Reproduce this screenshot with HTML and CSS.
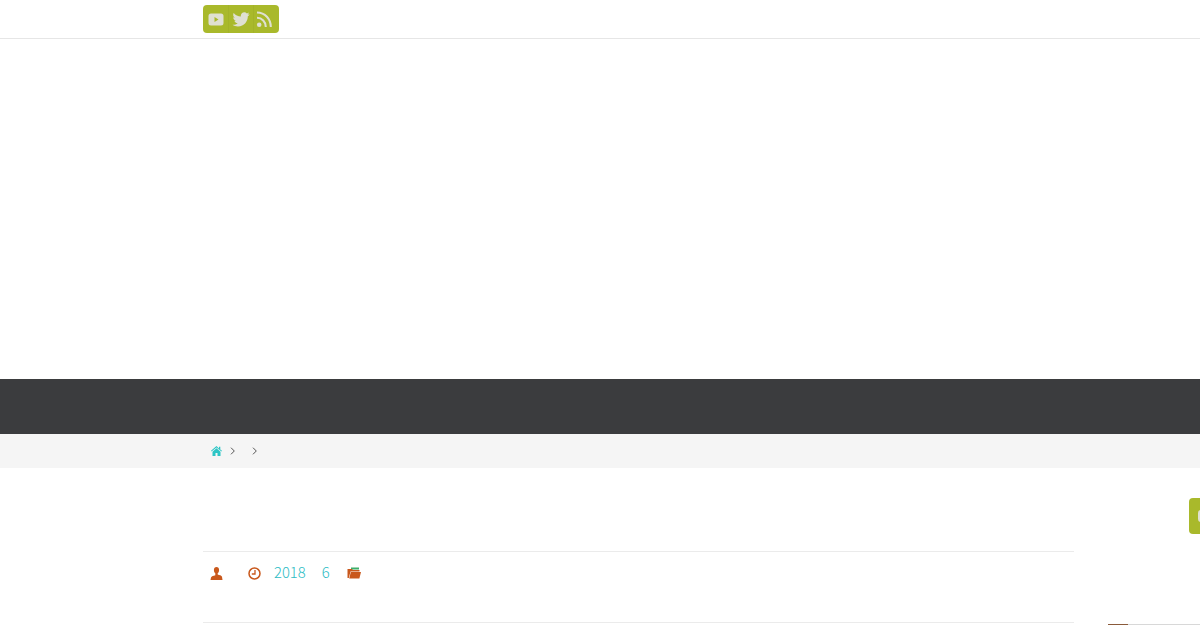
FILE: index.html
```html
<!doctype html>
<html lang="en">
  <head>
    <meta charset="UTF-8" />
    <title>Post</title>
    <link rel="stylesheet" href="styles.css">
  </head>
  <body>
    <div class="topbar">
      <div class="wrap">
        <div class="social">
          <a class="social-item" href="#">
            <svg width="16" height="13" viewBox="0 0 16 13"><path fill="#dfe0d2" fill-rule="evenodd" d="M3 .5h10A2.500 2.500 0 0 1 15.500 3v7a2.500 2.500 0 0 1-2.500 2.500H3A2.500 2.500 0 0 1 .5 10V3A2.500 2.500 0 0 1 3 .5zM6.500 4v5l4-2.500z"/></svg>
          </a>
          <a class="social-item" href="#">
            <svg width="18" height="15" viewBox="0 0 18 15"><path fill="#dfe0d2" d="M17.600 1.900c-.6.3-1.300.5-2 .6.7-.4 1.300-1.100 1.500-1.900-.7.4-1.400.7-2.200.8C14.200.7 13.300.3 12.300.3c-1.900 0-3.500 1.600-3.500 3.500 0 .3 0 .5.100.8C6 4.500 3.400 3.100 1.700 1c-.3.500-.5 1.100-.5 1.800 0 1.200.6 2.300 1.600 2.900-.6 0-1.100-.2-1.600-.4 0 1.700 1.200 3.100 2.800 3.400-.5.100-1 .2-1.600.1.400 1.400 1.700 2.400 3.300 2.400-1.500 1.200-3.100 1.800-5.200 1.600C2 13.800 3.900 14.400 5.900 14.400c6.400 0 10.100-5.400 9.900-10.200.7-.5 1.300-1.100 1.800-2.300z"/></svg>
          </a>
          <a class="social-item" href="#">
            <svg width="16" height="17" viewBox="0 0 16 17"><g fill="none" stroke="#dfe0d2" stroke-width="2.100"><path d="M1 1.500C9 1.500 14.800 7.800 14.800 16"/><path d="M1 6.800C6 6.800 9.800 10.800 9.800 16"/></g><circle cx="3.200" cy="13.800" r="2.300" fill="#dfe0d2"/></svg>
          </a>
        </div>
      </div>
    </div>

    <div class="banner"></div>
    <div class="title-bar"></div>

    <div class="breadcrumb">
      <div class="wrap crumbs">
        <svg class="crumb-home" width="11" height="10" viewBox="0 0 11 10"><path fill="#2cc5c5" d="M5.500 0 0 4.800l.5.800 5-4.200 5 4.200.5-.8-1.700-1.400V.8H8v1.600zM1.500 5.800V10h3V7h2v3h3V5.800L5.500 2.300z"/></svg>
        <svg class="crumb-sep" width="5" height="8" viewBox="0 0 5 8"><path fill="none" stroke="#555" d="M1 .7 4.300 4 1 7.300"/></svg>
        <svg class="crumb-sep second" width="5" height="8" viewBox="0 0 5 8"><path fill="none" stroke="#555" d="M1 .7 4.300 4 1 7.300"/></svg>
      </div>
    </div>

    <div class="content wrap">
      <div class="main">
        <div class="post-meta">
          <svg class="meta-user" width="13" height="13" viewBox="0 0 13 13"><path fill="#c9581c" d="M6.500 0C8.100 0 9.100 1.200 9.100 2.900c0 1.300-.6 2.600-1.400 3.300v1.300c1.600.6 4 1 4.300 2.200l.5 3.300H.5L1 10.400c.3-1.200 2.700-1.600 4.300-2.200V6.200C4.500 5.500 3.900 4.200 3.900 2.900 3.900 1.200 4.900 0 6.500 0z"/></svg>
          <svg class="meta-clock" width="13" height="13" viewBox="0 0 13 13"><circle cx="6.500" cy="6.500" r="5.500" fill="none" stroke="#c9581c" stroke-width="1.500"/><path fill="none" stroke="#c9581c" stroke-width="1.300" d="M7 3v4H3.800"/></svg>
          <a class="meta-link year" href="#">2018</a>
          <a class="meta-link month" href="#">6</a>
          <svg class="meta-folder" width="14" height="12" viewBox="0 0 14 12"><path fill="#3fae6a" d="M4 .5h8v2H4z"/><path fill="#c9581c" d="M.5 2H5l1 1h6.500v1.500H3.500L1.800 11H.5z"/><path fill="#c9581c" d="M3.800 5H14l-1.600 6.500H2.200z"/></svg>
        </div>
      </div>
      <div class="sidebar">
        <div class="widget-title"><span class="widget-accent"></span></div>
      </div>
    </div>

    <div class="float-tab"><span class="float-glyph"></span></div>
  </body>
</html>
```

FILE: styles.css
```css
html,
body {
  height: 630px;
  overflow: hidden;
}

body {
  margin: 0;
  font-family: "Noto Sans CJK JP", sans-serif;
  background-color: white;
  color: #333;
}

a {
  text-decoration: none;
}

.wrap {
  margin-left: 203px;
}

.topbar {
  height: 38px;
  border-bottom: 1px solid #e6e6e6;
}

.topbar .wrap {
  padding-top: 5px;
}

.social {
  display: flex;
  width: 76px;
  height: 28px;
  border-radius: 4px;
  background-color: #a9b92b;
}

.social-item {
  width: 25px;
  display: flex;
  justify-content: center;
  align-items: center;
  box-sizing: border-box;
  border-right: 1px solid #a3b329;
}

.social-item:first-child {
  width: 26px;
}

.social-item:last-child {
  border-right: none;
  padding-right: 5px;
}

.banner {
  height: 340px;
}

.title-bar {
  height: 55px;
  background-color: #3b3c3e;
}

.breadcrumb {
  height: 34px;
  background-color: #f5f5f5;
}

.crumbs {
  height: 34px;
  display: flex;
  align-items: center;
  padding-left: 8px;
}

.crumb-sep {
  margin-left: 8px;
}

.crumb-sep.second {
  margin-left: 17px;
}

.content {
  display: flex;
  gap: 34px;
  padding-top: 83px;
}

.main {
  width: 871px;
  height: 70px;
  flex-shrink: 0;
  border-top: 1px solid #ebebeb;
  border-bottom: 1px solid #ebebeb;
}

.post-meta {
  display: flex;
  align-items: center;
  height: 41px;
  padding-left: 7px;
  font-size: 14.8px;
  font-weight: 300;
}

.meta-user {
  margin-top: 2px;
}

.meta-clock {
  margin-left: 25px;
  margin-top: 1px;
}

.meta-link {
  color: #2cbcc4;
  margin-top: -2px;
}

.year {
  margin-left: 13px;
}

.month {
  margin-left: 16px;
}

.meta-folder {
  margin-left: 17px;
}

.sidebar {
  width: 92px;
  padding-top: 73px;
}

.widget-title {
  border-top: 1px solid #d8d8d8;
  position: relative;
}

.widget-accent {
  position: absolute;
  left: 0;
  top: -1px;
  width: 20px;
  height: 1px;
  background-color: #8a5a3a;
}

.float-tab {
  position: absolute;
  top: 498px;
  right: 0;
  width: 11px;
  height: 36px;
  border-radius: 4px 0 0 4px;
  background-color: #a9b92b;
  overflow: hidden;
}

.float-glyph {
  position: absolute;
  top: 12px;
  left: 9px;
  width: 8px;
  height: 12px;
  border-radius: 3px;
  background-color: #dfe0d2;
}
```
